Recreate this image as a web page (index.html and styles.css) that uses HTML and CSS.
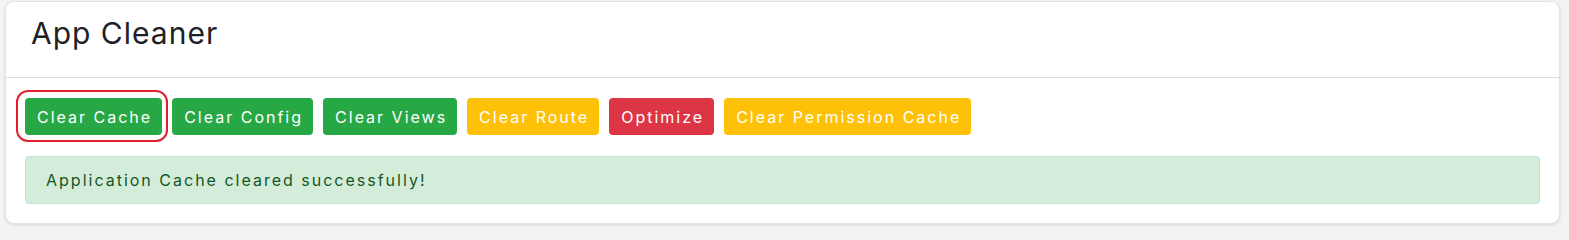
FILE: index.html
```html
<!DOCTYPE html>
<html lang="en">
<head>
<meta charset="utf-8">
<title>App Cleaner</title>
<link rel="stylesheet" href="styles.css">
</head>
<body>
<div class="page">
  <section class="card">
    <header class="card-header">
      <h1 class="card-title">App Cleaner</h1>
    </header>
    <div class="card-body">
      <div class="actions">
        <button class="btn btn-success btn-focus">Clear Cache</button>
        <button class="btn btn-success">Clear Config</button>
        <button class="btn btn-success">Clear Views</button>
        <button class="btn btn-warning">Clear Route</button>
        <button class="btn btn-danger">Optimize</button>
        <button class="btn btn-warning">Clear Permission Cache</button>
      </div>
      <div class="alert">Application Cache cleared successfully!</div>
    </div>
  </section>
</div>
</body>
</html>
```

FILE: styles.css
```css
html, body {
  margin: 0;
  padding: 0;
  background: #f3f3f3;
}
body {
  font-family: Inter, "Noto Sans", "Liberation Sans", sans-serif;
  color: #212529;
}
.page {
  padding: 1px 9px 7px 5px;
}
.card {
  background: #ffffff;
  border: 1px solid #e4e4e4;
  border-radius: 9px;
  box-shadow: 0 1px 3px rgba(0,0,0,0.12);
}
.card-header {
  height: 76px;
  box-sizing: border-box;
  padding: 13px 25px 0 25px;
  border-bottom: 1px solid #dcdcdc;
}
.card-title {
  margin: 0;
  font-size: 30px;
  line-height: 36px;
  font-weight: 400;
  letter-spacing: 1px;
  color: #1e2125;
}
.card-body {
  padding: 20px 19px 19px 19px;
}
.actions {
  display: flex;
  gap: 10px;
  margin-bottom: 21px;
}
.btn {
  font-family: inherit;
  font-size: 16px;
  letter-spacing: 2px;
  height: 37px;
  padding: 0 10px 0 12px;
  border: none;
  border-radius: 4px;
  color: #ffffff;
  cursor: pointer;
}
.btn-success { background: #28a745; }
.btn-warning { background: #ffc107; }
.btn-danger { background: #dc3545; }
.btn-focus {
  position: relative;
}
.btn-focus::after {
  content: "";
  position: absolute;
  left: -9px;
  right: -6px;
  top: -8px;
  bottom: -7px;
  border: 2px solid #e0202c;
  border-radius: 12px;
  pointer-events: none;
}
.alert {
  height: 46px;
  display: flex;
  align-items: center;
  padding: 0 20px;
  background: #d4edda;
  border: 1px solid #c3e6cb;
  border-radius: 4px;
  color: #155724;
  font-size: 16px;
  letter-spacing: 2px;
}
```
